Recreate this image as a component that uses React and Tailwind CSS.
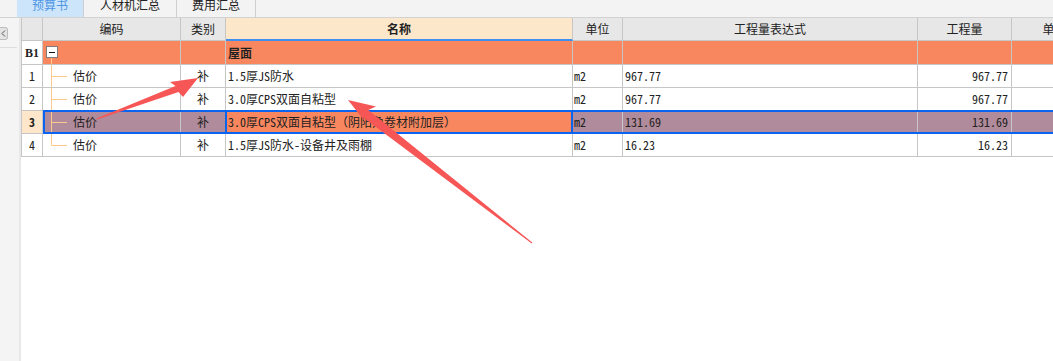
import React from 'react'

const sans = "font-['Noto_Sans_CJK_SC','Microsoft_YaHei',sans-serif]"
const mono = "font-['Noto_Sans_Mono_CJK_SC','Noto_Sans_CJK_SC',monospace]"
const line = 'border-r border-b border-[#c6c6c6]'

const ROWS = [
  { no: '1', name: '1.5厚JS防水', unit: 'm2', expr: '967.77', qty: '967.77' },
  { no: '2', name: '3.0厚CPS双面自粘型', unit: 'm2', expr: '967.77', qty: '967.77' },
  { no: '3', name: '3.0厚CPS双面自粘型（阴阳角卷材附加层）', unit: 'm2', expr: '131.69', qty: '131.69', selected: true },
  { no: '4', name: '1.5厚JS防水-设备井及雨棚', unit: 'm2', expr: '16.23', qty: '16.23', last: true },
]

function TreeLine({ last }) {
  return (
    <svg width="30" height="22" className="shrink-0">
      <path d={last ? 'M8.5 0V11.5H24' : 'M8.5 0V22M8.5 11.5H24'} stroke="#fbc98d" strokeWidth="1" fill="none" />
    </svg>
  )
}

function MinusBox() {
  return (
    <svg width="30" height="23" className="shrink-0">
      <rect x="3.5" y="5.5" width="11" height="11" fill="#fff" stroke="#7d7d7d" />
      <path d="M6 11.5H12" stroke="#111" />
      <path d="M8.5 17V23" stroke="#fbc98d" />
    </svg>
  )
}

function Arrows() {
  return (
    <svg className="pointer-events-none absolute left-0 top-0" width="1053" height="361">
      <polygon
        fill="#f65656"
        points="97,119.6 178.5,92 183,97 198,78 170,82 175.5,86 96.6,118.6"
      />
      <polygon
        fill="#f65656"
        points="532.3,242.6 368.2,110 376,106.5 348,100 366.5,123.5 362.6,117.1 531.7,243.4"
      />
    </svg>
  )
}

export default function App() {
  return (
    <div className={`relative h-[361px] w-[1053px] overflow-hidden bg-white text-[#222] ${sans}`}>
      {/* Tabs */}
      <div className="flex h-[18px] border-b border-[#d2d2d2] bg-[#f3f3f3] pl-[17px] text-[12px]">
        <div className="flex w-[67px] items-start justify-center border-r border-[#cfcfcf] bg-[#cde5fa] leading-[10px] text-[#4d95e6]">预算书</div>
        <div className="flex w-[93px] items-start justify-center border-r border-[#cfcfcf] leading-[10px]">人材机汇总</div>
        <div className="flex w-[79px] items-start justify-center border-r border-[#cfcfcf] leading-[10px]">费用汇总</div>
      </div>

      <div className="flex h-[343px]">
        {/* side strip */}
        <div className="flex w-[21px] shrink-0 flex-col border-r-2 border-[#e8e8e8] bg-[#f4f4f4]">
          <div className="mt-[9px] flex h-[13px] w-[8px] items-center justify-center rounded-r-[3px] border border-l-0 border-[#bdbdbd] bg-[#e4e4e4]">
            <svg width="5" height="7" viewBox="0 0 5 7">
              <path d="M4 0.5L1 3.5L4 6.5" stroke="#555" fill="none" />
            </svg>
          </div>
          <div className="mt-[7px] h-px w-[17px] bg-[#dcdcdc]" />
        </div>

        {/* grid */}
        <div className="min-w-0 flex-1 overflow-hidden">
          {/* header */}
          <div className="flex h-[23px] bg-[#e7e7e7] text-[12px]">
            <div className={`w-[22px] shrink-0 border-l ${line}`} />
            <div className={`flex w-[138px] shrink-0 items-center justify-center ${line}`}>编码</div>
            <div className={`flex w-[45px] shrink-0 items-center justify-center ${line}`}>类别</div>
            <div className="flex w-[347px] shrink-0 items-center justify-center border-r border-b-2 border-r-[#c6c6c6] border-b-[#3d8ff0] bg-[#fde7ca] font-bold">名称</div>
            <div className={`flex w-[50px] shrink-0 items-center justify-center ${line}`}>单位</div>
            <div className={`flex w-[295px] shrink-0 items-center justify-center ${line}`}>工程量表达式</div>
            <div className={`flex w-[94px] shrink-0 items-center justify-center ${line}`}>工程量</div>
            <div className={`flex w-[86px] shrink-0 items-center justify-center ${line}`}>单价</div>
          </div>

          {/* B1 */}
          <div className="flex h-[24px] text-[12px]">
            <div className={`flex w-[22px] shrink-0 items-center justify-center border-l bg-white font-['Liberation_Serif',serif] font-bold ${line}`}>B1</div>
            <div className={`flex w-[138px] shrink-0 items-start bg-[#f8875f] ${line}`}>
              <MinusBox />
            </div>
            <div className={`w-[45px] shrink-0 bg-[#f8875f] ${line}`} />
            <div className={`flex w-[347px] shrink-0 items-center bg-[#f8875f] pl-[2px] font-bold ${line}`}>屋面</div>
            <div className={`w-[50px] shrink-0 bg-[#f8875f] ${line}`} />
            <div className={`w-[295px] shrink-0 bg-[#f8875f] ${line}`} />
            <div className={`w-[94px] shrink-0 bg-[#f8875f] ${line}`} />
            <div className={`w-[86px] shrink-0 bg-[#f8875f] ${line}`} />
          </div>

          {ROWS.map((r) => {
            const bg = r.selected ? 'bg-[#b08b9b]' : 'bg-white'
            return (
              <div key={r.no} className="relative flex h-[23px] text-[12px]">
                <div className={`flex w-[22px] shrink-0 items-center justify-center border-l ${mono} ${r.selected ? 'bg-[#fde6c9] font-bold' : 'bg-white'} ${line}`}>{r.no}</div>
                <div className={`flex w-[138px] shrink-0 items-center ${bg} ${line}`}>
                  <TreeLine last={r.last} />
                  <span className="leading-none">估价</span>
                </div>
                <div className={`flex w-[45px] shrink-0 items-center justify-center ${bg} ${line}`}>补</div>
                <div className={`relative flex w-[347px] shrink-0 items-center whitespace-nowrap pl-[2px] ${mono} ${r.selected ? 'bg-[#f8875f]' : 'bg-white'} ${line}`}>
                  {r.name}
                  {r.selected && <div className="pointer-events-none absolute -inset-px border-2 border-[#0a64f0]" />}
                </div>
                <div className={`flex w-[50px] shrink-0 items-center pl-[1px] ${mono} ${bg} ${line}`}>{r.unit}</div>
                <div className={`flex w-[295px] shrink-0 items-center pl-[2px] ${mono} ${bg} ${line}`}>{r.expr}</div>
                <div className={`flex w-[94px] shrink-0 items-center justify-end pr-[3px] ${mono} ${bg} ${line}`}>{r.qty}</div>
                <div className={`w-[86px] shrink-0 ${bg} ${line}`} />
                {r.selected && (
                  <div className="pointer-events-none absolute -top-px bottom-0 left-[22px] right-0 border-y-2 border-l-2 border-[#0a64f0]" />
                )}
              </div>
            )
          })}
        </div>
      </div>

      <Arrows />
    </div>
  )
}
